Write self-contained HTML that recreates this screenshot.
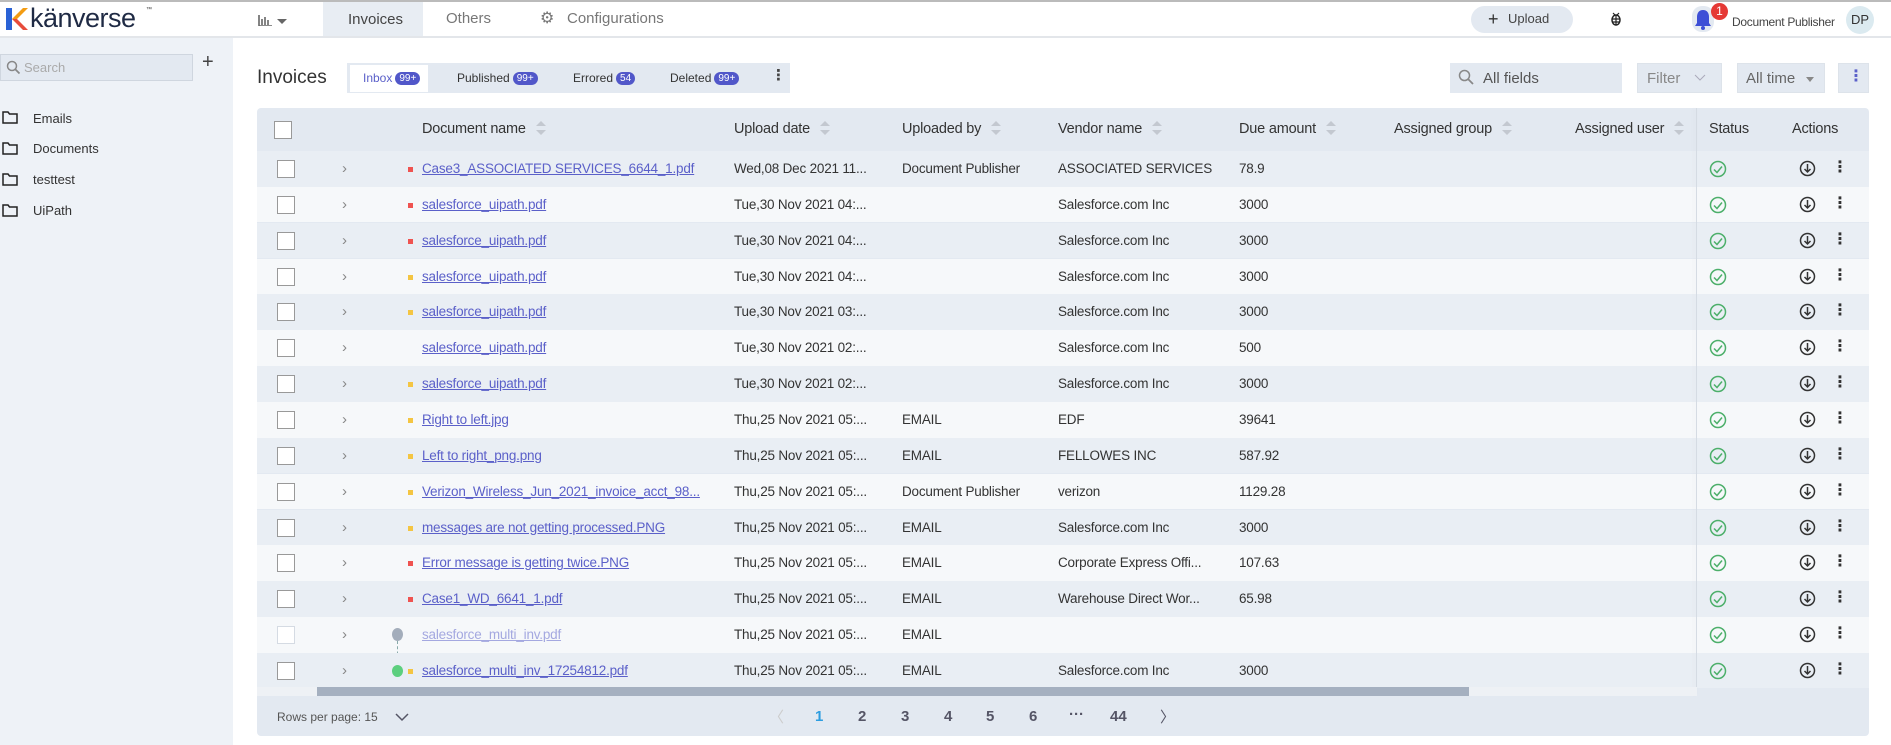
<!DOCTYPE html>
<html><head><meta charset="utf-8"><style>
*{box-sizing:border-box;margin:0;padding:0}
body{width:1891px;height:745px;overflow:hidden;background:#fff;font-family:"Liberation Sans","DejaVu Sans",sans-serif;color:#333;font-size:14px;position:relative}
.a{position:absolute}
.top{left:0;top:0;width:1891px;height:38px;border-top:2px solid #bbb;border-bottom:2px solid #e3e6ea;background:#fff}
.side{left:0;top:38px;width:233px;height:707px;background:#eef2f7}
.t{white-space:nowrap}
.badge{display:inline-block;background:#5157c9;color:#fff;border-radius:8px;font-size:10px;padding:1px 4px;margin-left:3px;vertical-align:1px}
.row{position:absolute;left:257px;width:1612px;height:35.6px}
.row>div{position:absolute;top:0;line-height:35.6px;white-space:nowrap;font-size:13.5px;letter-spacing:-0.2px}
.cb{width:18px;height:18px;border:1px solid #999;background:#fff;top:9px!important}
.lnk{color:#5b60c9;text-decoration:underline}
.dot{width:5px;height:5px;top:16px!important}
.sort{display:inline-block;margin-left:10px;vertical-align:-2px;width:10px;height:14px;position:relative}
.sort:before,.sort:after{content:"";position:absolute;left:0;border-left:5px solid transparent;border-right:5px solid transparent}
.sort:before{top:0;border-bottom:5px solid #c3c8d0}
.sort:after{bottom:0;border-top:5px solid #c3c8d0}
.hd{font-size:14.5px!important}
</style></head><body>
<div class="a top"></div>
<svg class="a" style="left:6px;top:8px" width="22" height="22" viewBox="0 0 22 22"><path d="M0 0h6v22H0z" fill="#2a62d6"/><path d="M6 11L17 0h5L11 11z" fill="#f39c12"/><path d="M6 11l11 11h5L11 11z" fill="#e74c3c"/></svg>
<div class="a t" style="left:30px;top:3px;font-size:27px;color:#1f2a44;letter-spacing:-0.5px">känverse</div>
<div class="a t" style="left:146px;top:7px;font-size:6px">™</div>
<svg class="a" style="left:258px;top:15px" width="14" height="11"><path d="M1 0v11h13M4 4v6M7 2v8M10 5v5" stroke="#666" stroke-width="1.6" fill="none"/></svg>
<div class="a" style="left:277px;top:19px;border-left:5px solid transparent;border-right:5px solid transparent;border-top:5px solid #666"></div>
<div class="a" style="left:323px;top:2px;width:100px;height:34px;background:#e8edf3"></div>
<div class="a t" style="left:348px;top:11px;font-size:15px;color:#444">Invoices</div>
<div class="a t" style="left:446px;top:10px;font-size:15px;color:#777">Others</div>
<div class="a t" style="left:540px;top:8px;font-size:16px;color:#777">⚙</div>
<div class="a t" style="left:567px;top:10px;font-size:15px;color:#777">Configurations</div>
<div class="a" style="left:1471px;top:6px;width:102px;height:27px;background:#e3e9f1;border-radius:14px"></div>
<div class="a t" style="left:1488px;top:9px;font-size:18px;color:#333">+</div>
<div class="a t" style="left:1508px;top:11px;font-size:13px;color:#444">Upload</div>
<svg class="a" style="left:1610px;top:12px" width="12" height="14"><ellipse cx="6" cy="8" rx="4" ry="5" fill="none" stroke="#222" stroke-width="1.5"/><path d="M6 3v10M2 7h8M2 10h8M3 1l2 2M9 1L7 3" stroke="#222" stroke-width="1.2"/></svg>
<div class="a" style="left:1692px;top:6px;width:22px;height:26px;background:#e3e9f1;border-radius:10px"></div>
<svg class="a" style="left:1694px;top:8px" width="18" height="22"><path d="M9 2c4 0 6 3 6 7v6l2 3H1l2-3V9c0-4 2-7 6-7z" fill="#3d4fd6"/><circle cx="9" cy="20" r="2" fill="#3d4fd6"/></svg>
<div class="a" style="left:1711px;top:3px;width:17px;height:17px;border-radius:50%;background:#e53935;color:#fff;font-size:12px;text-align:center;line-height:17px">1</div>
<div class="a t" style="left:1732px;top:15px;font-size:12px;color:#444;letter-spacing:-0.3px">Document Publisher</div>
<div class="a" style="left:1846px;top:6px;width:28px;height:28px;border-radius:50%;background:#dbeaf0;font-size:13px;text-align:center;line-height:28px;color:#333">DP</div>

<div class="a side"></div>
<div class="a" style="left:0;top:54px;width:193px;height:27px;background:#e3e9f1;border:1px solid #cfd6df"></div>
<svg class="a" style="left:6px;top:60px" width="15" height="15"><circle cx="6" cy="6" r="4.5" fill="none" stroke="#888" stroke-width="1.5"/><path d="M9.5 9.5l4 4" stroke="#888" stroke-width="1.8"/></svg>
<div class="a t" style="left:24px;top:60px;font-size:13px;color:#aaa">Search</div>
<div class="a t" style="left:202px;top:51px;font-size:20px;color:#444">+</div>
<svg class="a" style="left:2px;top:111px" width="16" height="13"><path d="M1 1h5l1.5 2H15v9H1z" fill="none" stroke="#222" stroke-width="1.5"/></svg>
<div class="a t" style="left:33px;top:111px;font-size:13px">Emails</div>
<svg class="a" style="left:2px;top:142px" width="16" height="13"><path d="M1 1h5l1.5 2H15v9H1z" fill="none" stroke="#222" stroke-width="1.5"/></svg>
<div class="a t" style="left:33px;top:141px;font-size:13px">Documents</div>
<svg class="a" style="left:2px;top:173px" width="16" height="13"><path d="M1 1h5l1.5 2H15v9H1z" fill="none" stroke="#222" stroke-width="1.5"/></svg>
<div class="a t" style="left:33px;top:172px;font-size:13px">testtest</div>
<svg class="a" style="left:2px;top:204px" width="16" height="13"><path d="M1 1h5l1.5 2H15v9H1z" fill="none" stroke="#222" stroke-width="1.5"/></svg>
<div class="a t" style="left:33px;top:203px;font-size:13px">UiPath</div>

<div class="a t" style="left:257px;top:67px;font-size:19px;color:#333">Invoices</div>
<div class="a" style="left:347px;top:63px;width:443px;height:30px;background:#e3e9f1"></div>
<div class="a" style="left:350px;top:65px;width:78px;height:27px;background:#fff"></div>
<div class="a t" style="left:363px;top:71px;font-size:12px;color:#5b60c9">Inbox<span class="badge">99+</span></div>
<div class="a t" style="left:457px;top:71px;font-size:12px;color:#333">Published<span class="badge">99+</span></div>
<div class="a t" style="left:573px;top:71px;font-size:12px;color:#333">Errored<span class="badge">54</span></div>
<div class="a t" style="left:670px;top:71px;font-size:12px;color:#333">Deleted<span class="badge">99+</span></div>
<div class="a t" style="left:771px;top:66px;font-size:15px;font-weight:bold;color:#444">⋮</div>
<div class="a" style="left:1450px;top:63px;width:172px;height:30px;background:#e3e9f1"></div>
<svg class="a" style="left:1458px;top:69px" width="16" height="16"><circle cx="6.5" cy="6.5" r="5" fill="none" stroke="#888" stroke-width="1.5"/><path d="M10 10l5 5" stroke="#888" stroke-width="1.8"/></svg>
<div class="a t" style="left:1483px;top:70px;font-size:15px;color:#555">All fields</div>
<div class="a" style="left:1637px;top:63px;width:85px;height:30px;background:#e3e9f1;border:1px solid #dde3ea"></div>
<div class="a t" style="left:1647px;top:70px;font-size:15px;color:#888">Filter</div>
<svg class="a" style="left:1694px;top:74px" width="12" height="7"><path d="M1 1l5 5 5-5" stroke="#aab" fill="none"/></svg>
<div class="a" style="left:1737px;top:63px;width:88px;height:30px;background:#e3e9f1;border:1px solid #dde3ea"></div>
<div class="a t" style="left:1746px;top:70px;font-size:15px;color:#666">All time</div>
<div class="a" style="left:1806px;top:77px;border-left:4px solid transparent;border-right:4px solid transparent;border-top:5px solid #888"></div>
<div class="a" style="left:1838px;top:63px;width:31px;height:30px;background:#e3e9f1;border:1px solid #dde3ea"></div>
<div class="a t" style="left:1848px;top:66px;font-size:16px;font-weight:bold;color:#5b60c9">⋮</div>

<div class="a" style="left:257px;top:108px;width:1612px;height:628px;background:#e3e9f1;border-radius:4px"></div>
<div class="row" style="top:108px;height:43px">
<div class="cb" style="left:17px;top:13px!important"></div>
<div class="hd" style="left:165px;line-height:43px">Document name<span class="sort"></span></div>
<div class="hd" style="left:477px;line-height:43px">Upload date<span class="sort"></span></div>
<div class="hd" style="left:645px;line-height:43px">Uploaded by<span class="sort"></span></div>
<div class="hd" style="left:801px;line-height:43px">Vendor name<span class="sort"></span></div>
<div class="hd" style="left:982px;line-height:43px">Due amount<span class="sort"></span></div>
<div class="hd" style="left:1137px;line-height:43px">Assigned group<span class="sort"></span></div>
<div class="hd" style="left:1318px;line-height:43px">Assigned user<span class="sort"></span></div>
<div class="hd" style="left:1452px;line-height:43px">Status</div>
<div class="hd" style="left:1535px;line-height:43px">Actions</div>
</div>

<div id="rows"></div>
<div class="a" style="left:1696px;top:108px;width:1px;height:588px;background:#d5dbe3;box-shadow:-2px 0 4px rgba(0,0,0,.06)"></div>
<div class="a" style="left:257px;top:687px;width:1440px;height:9px;background:#eef1f5"></div>
<div class="a" style="left:317px;top:687px;width:1152px;height:9px;background:#a5b0c0"></div>
<div class="a t" style="left:277px;top:710px;font-size:12px;color:#555">Rows per page: 15</div>
<svg class="a" style="left:395px;top:713px" width="14" height="9"><path d="M1 1l6 6 6-6" stroke="#556" stroke-width="1.5" fill="none"/></svg>
<div class="a t" style="left:769px;top:706px;font-size:15px;color:#ccc">〈</div>
<div class="a t" style="left:815px;top:708px;font-size:15px;font-weight:bold;color:#2d9de0">1</div>
<div class="a t" style="left:858px;top:708px;font-size:15px;font-weight:bold;color:#556">2</div>
<div class="a t" style="left:901px;top:708px;font-size:15px;font-weight:bold;color:#556">3</div>
<div class="a t" style="left:944px;top:708px;font-size:15px;font-weight:bold;color:#556">4</div>
<div class="a t" style="left:986px;top:708px;font-size:15px;font-weight:bold;color:#556">5</div>
<div class="a t" style="left:1029px;top:708px;font-size:15px;font-weight:bold;color:#556">6</div>
<div class="a t" style="left:1069px;top:706px;font-size:15px;font-weight:bold;color:#556">···</div>
<div class="a t" style="left:1110px;top:708px;font-size:15px;font-weight:bold;color:#556">44</div>
<div class="a t" style="left:1160px;top:706px;font-size:15px;color:#556">〉</div>

<script>
var d=[
["r","Case3_ASSOCIATED SERVICES_6644_1.pdf","Wed,08 Dec 2021 11...","Document Publisher","ASSOCIATED SERVICES","78.9"],
["r","salesforce_uipath.pdf","Tue,30 Nov 2021 04:...","","Salesforce.com Inc","3000"],
["r","salesforce_uipath.pdf","Tue,30 Nov 2021 04:...","","Salesforce.com Inc","3000"],
["y","salesforce_uipath.pdf","Tue,30 Nov 2021 04:...","","Salesforce.com Inc","3000"],
["y","salesforce_uipath.pdf","Tue,30 Nov 2021 03:...","","Salesforce.com Inc","3000"],
["","salesforce_uipath.pdf","Tue,30 Nov 2021 02:...","","Salesforce.com Inc","500"],
["y","salesforce_uipath.pdf","Tue,30 Nov 2021 02:...","","Salesforce.com Inc","3000"],
["y","Right to left.jpg","Thu,25 Nov 2021 05:...","EMAIL","EDF","39641"],
["y","Left to right_png.png","Thu,25 Nov 2021 05:...","EMAIL","FELLOWES INC","587.92"],
["y","Verizon_Wireless_Jun_2021_invoice_acct_98...","Thu,25 Nov 2021 05:...","Document Publisher","verizon","1129.28"],
["y","messages are not getting processed.PNG","Thu,25 Nov 2021 05:...","EMAIL","Salesforce.com Inc","3000"],
["r","Error message is getting twice.PNG","Thu,25 Nov 2021 05:...","EMAIL","Corporate Express Offi...","107.63"],
["r","Case1_WD_6641_1.pdf","Thu,25 Nov 2021 05:...","EMAIL","Warehouse Direct Wor...","65.98"],
["g","salesforce_multi_inv.pdf","Thu,25 Nov 2021 05:...","EMAIL","",""],
["G","salesforce_multi_inv_17254812.pdf","Thu,25 Nov 2021 05:...","EMAIL","Salesforce.com Inc","3000"]];
var h="";
d.forEach(function(r,i){
var top=151+i*35.85,bg=i%2?"#f6f8fa":"#e9eef4";
h+='<div class="row" style="top:'+top+'px;background:'+bg+'">';
h+='<div class="cb" style="left:20px;'+(r[0]=="g"?'border-color:#d5dbe3':'')+'"></div>';
h+='<div style="left:85px;color:#888;font-size:15px">›</div>';
if(r[0]=="r"||r[0]=="y"||r[0]=="G")h+='<div class="dot" style="left:151px;background:'+(r[0]=="r"?"#ef5350":"#f4c542")+'"></div>';
if(r[0]=="g")h+='<div style="left:135px;top:11px;width:11px;height:13px;border-radius:50%;background:#a3adbb"></div><div style="left:140px;top:24px;width:0;height:24px;border-left:1px dashed #8aa"></div>';
if(r[0]=="G")h+='<div style="left:135px;top:12px;width:11px;height:12px;border-radius:50%;background:#5ccf7e"></div>';
h+='<div class="lnk" style="left:165px;'+(r[0]=="g"?'color:#a4a8e0':'')+'">'+r[1]+'</div>';
h+='<div style="left:477px">'+r[2]+'</div><div style="left:645px">'+r[3]+'</div><div style="left:801px">'+r[4]+'</div><div style="left:982px">'+r[5]+'</div>';
h+='<div style="left:1452px;top:9px;line-height:0"><svg width="18" height="18"><circle cx="9" cy="9" r="7.5" fill="none" stroke="#4caf6a" stroke-width="1.5"/><path d="M5 9.5l3 3 5-6" stroke="#4caf6a" stroke-width="1.5" fill="none"/></svg></div>';
h+='<div style="left:1542px;top:9px;line-height:0"><svg width="17" height="17"><circle cx="8.5" cy="8.5" r="7" fill="none" stroke="#333" stroke-width="1.5"/><path d="M8.5 4v8M5.5 9l3 3 3-3" stroke="#333" stroke-width="1.5" fill="none"/></svg></div>';
h+='<div style="left:1575px;top:-1px;font-weight:bold;font-size:16px">⋮</div></div>';
});
document.getElementById("rows").innerHTML=h;
</script>
</body></html>
